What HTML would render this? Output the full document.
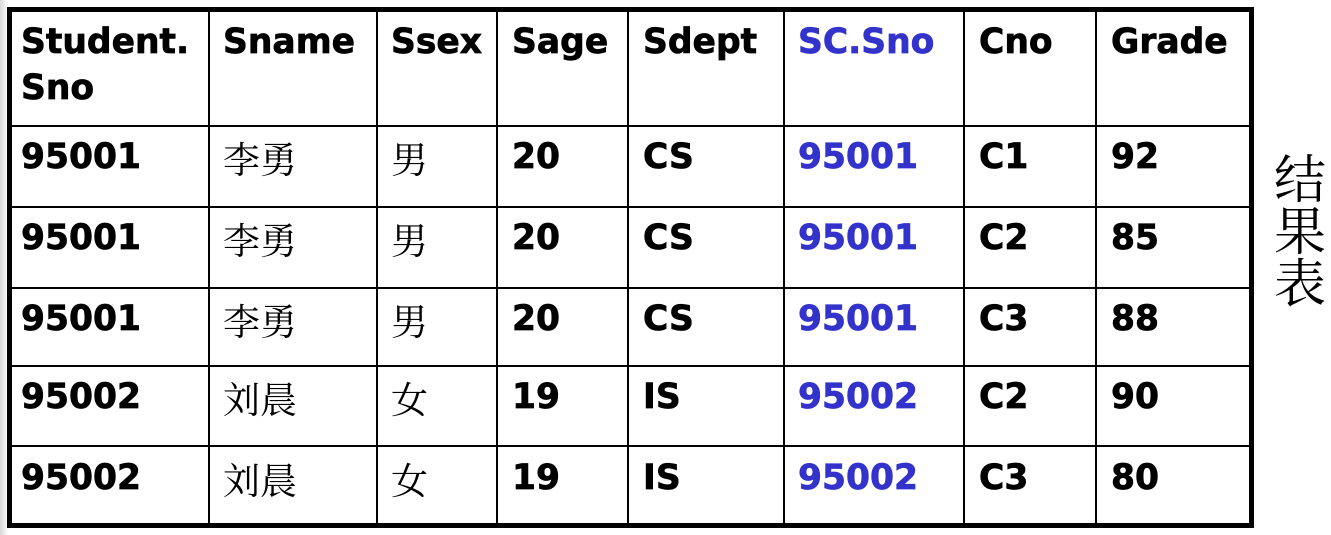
<!DOCTYPE html>
<html><head><meta charset="utf-8"><style>
body{margin:0;width:1331px;height:535px;background:#fff;position:relative;overflow:hidden;font-family:"DejaVu Sans","Liberation Sans","Noto Sans CJK SC",sans-serif}
.g{position:absolute;left:0;top:0;width:8px;height:535px;background:linear-gradient(90deg,#d8d8d8,#fff)}
.h{position:absolute;background:#000}
.t{position:absolute;font-weight:bold;font-size:34.5px;line-height:46px;color:#000;white-space:nowrap;-webkit-text-stroke:0.7px currentColor}
.c{font-family:"Noto Serif CJK SC","Noto Sans CJK SC",serif;font-weight:normal;font-size:37px;-webkit-text-stroke:0}
.b{color:#3333cc}
</style></head><body>
<div class="g"></div>
<div class="h" style="left:7px;top:7px;width:1247px;height:5px"></div>
<div class="h" style="left:7px;top:523px;width:1247px;height:5px"></div>
<div class="h" style="left:7px;top:7px;width:5px;height:521px"></div>
<div class="h" style="left:1249px;top:7px;width:5px;height:521px"></div>
<div class="h" style="left:7px;top:125px;width:1247px;height:2px"></div>
<div class="h" style="left:7px;top:206px;width:1247px;height:2px"></div>
<div class="h" style="left:7px;top:287px;width:1247px;height:2px"></div>
<div class="h" style="left:7px;top:365px;width:1247px;height:2px"></div>
<div class="h" style="left:7px;top:445px;width:1247px;height:2px"></div>
<div class="h" style="left:208px;top:7px;width:2px;height:521px"></div>
<div class="h" style="left:376px;top:7px;width:2px;height:521px"></div>
<div class="h" style="left:496px;top:7px;width:2px;height:521px"></div>
<div class="h" style="left:627px;top:7px;width:2px;height:521px"></div>
<div class="h" style="left:783px;top:7px;width:2px;height:521px"></div>
<div class="h" style="left:963px;top:7px;width:2px;height:521px"></div>
<div class="h" style="left:1095px;top:7px;width:2px;height:521px"></div>

<div class="t" style="left:21px;top:19px">Student.<br>Sno</div>
<div class="t" style="left:223px;top:19px">Sname</div>
<div class="t" style="left:391px;top:19px">Ssex</div>
<div class="t" style="left:512px;top:19px">Sage</div>
<div class="t" style="left:643px;top:19px">Sdept</div>
<div class="t b" style="left:798px;top:19px">SC.Sno</div>
<div class="t" style="left:979px;top:19px">Cno</div>
<div class="t" style="left:1111px;top:19px">Grade</div>

<div style="position:absolute;left:0;top:134px">
<div class="t" style="left:21px">95001</div><div class="t c" style="left:223px">李勇</div><div class="t c" style="left:391px">男</div><div class="t" style="left:512px">20</div><div class="t" style="left:643px">CS</div><div class="t b" style="left:798px">95001</div><div class="t" style="left:979px">C1</div><div class="t" style="left:1111px">92</div></div>
<div style="position:absolute;left:0;top:215px">
<div class="t" style="left:21px">95001</div><div class="t c" style="left:223px">李勇</div><div class="t c" style="left:391px">男</div><div class="t" style="left:512px">20</div><div class="t" style="left:643px">CS</div><div class="t b" style="left:798px">95001</div><div class="t" style="left:979px">C2</div><div class="t" style="left:1111px">85</div></div>
<div style="position:absolute;left:0;top:296px">
<div class="t" style="left:21px">95001</div><div class="t c" style="left:223px">李勇</div><div class="t c" style="left:391px">男</div><div class="t" style="left:512px">20</div><div class="t" style="left:643px">CS</div><div class="t b" style="left:798px">95001</div><div class="t" style="left:979px">C3</div><div class="t" style="left:1111px">88</div></div>
<div style="position:absolute;left:0;top:374px">
<div class="t" style="left:21px">95002</div><div class="t c" style="left:223px">刘晨</div><div class="t c" style="left:391px">女</div><div class="t" style="left:512px">19</div><div class="t" style="left:643px">IS</div><div class="t b" style="left:798px">95002</div><div class="t" style="left:979px">C2</div><div class="t" style="left:1111px">90</div></div>
<div style="position:absolute;left:0;top:455px">
<div class="t" style="left:21px">95002</div><div class="t c" style="left:223px">刘晨</div><div class="t c" style="left:391px">女</div><div class="t" style="left:512px">19</div><div class="t" style="left:643px">IS</div><div class="t b" style="left:798px">95002</div><div class="t" style="left:979px">C3</div><div class="t" style="left:1111px">80</div></div>

<div style="position:absolute;left:1274px;top:150px;width:56px;font-family:'Noto Serif CJK SC','Noto Sans CJK SC',serif;font-size:52px;line-height:52px">结<br>果<br>表</div>
</body></html>
